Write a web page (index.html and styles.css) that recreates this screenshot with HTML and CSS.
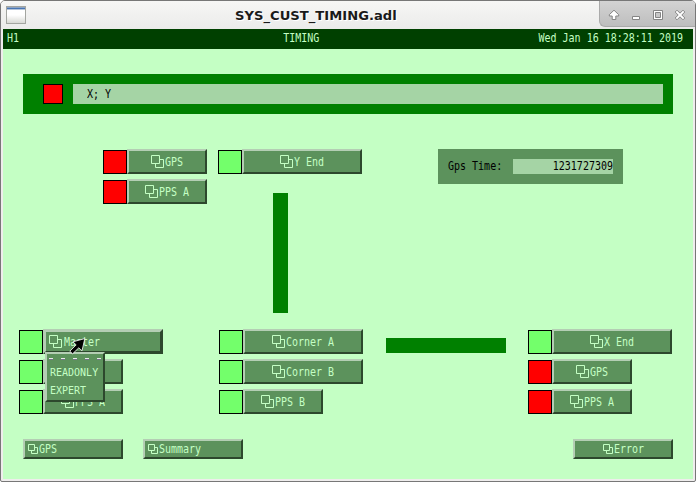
FILE: index.html
```html
<!DOCTYPE html>
<html lang="en">
<head>
<meta charset="utf-8">
<title>SYS_CUST_TIMING.adl</title>
<link rel="stylesheet" href="styles.css">
</head>
<body>
<svg class="defs" aria-hidden="true">
  <symbol id="rel" viewBox="0 0 13 13"><path d="M.5 .5H8.5V8.5H.5ZM9 4.5H12.5V12.5H4.5V9"/></symbol>
  <symbol id="rel-s" viewBox="0 0 10 10"><path d="M.5 .5H6.5V6.5H.5ZM7 3.5H9.5V9.5H3.5V7"/></symbol>
</svg>
<div class="window">
  <header class="titlebar">
    <svg class="app-icon" width="20" height="18" viewBox="0 0 20 18"><defs><linearGradient id="g" x1="0" y1="0" x2="0" y2="1"><stop offset="0" stop-color="#fff"/><stop offset=".5" stop-color="#fff"/><stop offset="1" stop-color="#d6d7d2"/></linearGradient></defs><rect x=".5" y=".5" width="19" height="17" fill="url(#g)" stroke="#a3a5a0"/><path d="M1 1.5H19" stroke="#8fa5c4"/><path d="M1 2.5H19" stroke="#4876b4"/><path d="M1 3.5H19" stroke="#b3c3da"/></svg>
    <h1>SYS_CUST_TIMING.adl</h1>
    <div class="controls">
      <svg width="96" height="27" viewBox="0 0 96 27">
        <g fill="#fff" stroke="#858585">
          <path d="M15 10.2L19.7 14.7V16H16.8V19.5H13.2V16H10.3V14.7Z"/>
          <path d="M33.5 16.5H40.5V19.5H33.5Z"/>
          <path fill-rule="evenodd" d="M54.5 10.5H63.5V19.5H54.5ZM56.5 12.5V17.5H61.5V12.5Z"/>
          <path d="M76.2 12L78 10.2L81 13.2L84 10.2L85.8 12L82.8 15L85.8 18L84 19.8L81 16.8L78 19.8L76.2 18L79.2 15Z"/>
        </g>
      </svg>
    </div>
  </header>
  <main class="display">
    <div class="status"><span class="t">H1</span><span class="t">TIMING</span><span class="t">Wed Jan 16 18:28:11 2019</span></div>
    <div class="banner"><i class="alarm"></i><div class="message"><span class="t">X; Y</span></div></div>
    <section class="upper">
      <div class="group">
        <div class="item"><i class="led red"></i><div class="btn"><svg class="icon"><use href="#rel"/></svg><span class="t">GPS</span></div></div>
        <div class="item"><i class="led red"></i><div class="btn"><svg class="icon"><use href="#rel"/></svg><span class="t">PPS A</span></div></div>
      </div>
      <div class="group y-end">
        <div class="item"><i class="led"></i><div class="btn wide"><svg class="icon"><use href="#rel"/></svg><span class="t">Y End</span></div></div>
        <i class="arm-y"></i>
      </div>
      <div class="gps"><span class="t">Gps Time:</span><div class="value"><span class="t">1231727309</span></div></div>
    </section>
    <section class="lower">
      <div class="group master">
        <div class="item"><i class="led"></i><div class="btn wide pressed"><svg class="icon"><use href="#rel"/></svg><span class="t">Master</span></div></div>
        <div class="item"><i class="led"></i><div class="btn"></div></div>
        <div class="item"><i class="led"></i><div class="btn"><svg class="icon"><use href="#rel"/></svg><span class="t">PPS A</span></div></div>
        <div class="menu">
          <svg class="tear" width="52" height="2"><path d="M0 .5H52" stroke="#e6efe6" stroke-dasharray="4 8"/><path d="M0 1.5H52" stroke="#77708a" stroke-dasharray="4 8"/></svg>
          <span>READONLY</span><span>EXPERT</span>
        </div>
        <svg class="cursor" width="17" height="17" viewBox="0 0 17 17"><path d="M15.8 .6L13 12.8L9.8 9.8L3.6 15.8L.8 13.2L7.2 6.9L4 3.8Z" fill="#000" stroke="#fff" stroke-width=".8"/></svg>
      </div>
      <div class="group">
        <div class="item"><i class="led"></i><div class="btn wide"><svg class="icon"><use href="#rel"/></svg><span class="t">Corner A</span></div></div>
        <div class="item"><i class="led"></i><div class="btn wide"><svg class="icon"><use href="#rel"/></svg><span class="t">Corner B</span></div></div>
        <div class="item"><i class="led"></i><div class="btn"><svg class="icon"><use href="#rel"/></svg><span class="t">PPS B</span></div></div>
      </div>
      <i class="arm-x"></i>
      <div class="group">
        <div class="item"><i class="led"></i><div class="btn wide"><svg class="icon"><use href="#rel"/></svg><span class="t">X End</span></div></div>
        <div class="item"><i class="led red"></i><div class="btn"><svg class="icon"><use href="#rel"/></svg><span class="t">GPS</span></div></div>
        <div class="item"><i class="led red"></i><div class="btn"><svg class="icon"><use href="#rel"/></svg><span class="t">PPS A</span></div></div>
      </div>
    </section>
    <footer class="links">
      <div class="btn small"><svg class="icon"><use href="#rel-s"/></svg><span class="t">GPS</span></div>
      <div class="btn small"><svg class="icon"><use href="#rel-s"/></svg><span class="t">Summary</span></div>
      <div class="btn small error"><svg class="icon"><use href="#rel-s"/></svg><span class="t">Error</span></div>
    </footer>
  </main>
</div>
</body>
</html>
```
FILE: styles.css
```css
* { box-sizing: border-box; }
html { background: #fff; }
body { margin: 0; font: 10px/13px "DejaVu Sans Mono", monospace; color: #c4ffc4; }
i { display: block; flex: none; }
.defs { position: absolute; width: 0; height: 0; }
.window {
  width: 696px; height: 482px; padding: 0 2px 2px;
  border: 1px solid #777; border-radius: 5px 5px 2px 2px;
  background: #efeded; overflow: hidden;
}
.titlebar {
  display: flex; height: 28px; margin: 0 -2px;
  background: linear-gradient(#f6f6f5, #ebebea);
}
.app-icon { margin: 5px 0 0 5px; flex: none; }
h1 {
  flex: 1; margin: 0 0 0 23px; padding-left: 186px; color: #1a1a1a;
  font: bold 13.15px/29px "DejaVu Sans", sans-serif; text-shadow: 1px 1px #fff;
  white-space: nowrap;
}
.controls {
  width: 96px; height: 26px; overflow: hidden;
  border: 1px solid #aaa; border-width: 0 0 1px 1px; border-radius: 0 0 0 6px;
  background: linear-gradient(#d3d3d3, #bebebe);
}
.controls svg { display: block; margin: -1px 0 0 -1px; }
.display { height: 450px; background: #c4ffc4; }
.t { display: block; white-space: pre; transform: scaleY(1.23); transform-origin: 0 10px; }
.status {
  display: flex; height: 20px; padding: 3px 10px 0 4px;
  background: #004000; justify-content: space-between;
}
.status .t:nth-child(2) { margin-left: 45px; }
.banner {
  display: flex; gap: 10px; height: 40px; margin: 25px 20px 0;
  padding: 10px 10px 10px 20px; background: #008000;
}
.alarm { width: 20px; background: #f00; border: 1px solid #000; }
.message { flex: 1; padding: 4px 14px; background: #a5d4a5; color: #000; }
.upper { display: flex; height: 164px; margin: 35px 0 0 100px; align-items: flex-start; }
.group { display: flex; flex-direction: column; gap: 5px; align-items: flex-start; }
.item { display: flex; align-items: flex-end; }
.led { width: 24px; height: 24px; background: #73ff6b; border: 1px solid #000; }
.red { background: #f00; }
.btn {
  display: flex; gap: 1px; justify-content: center; align-items: flex-start;
  width: 80px; height: 25px; padding-top: 4px;
  background: #5c925c; border: 2px solid; border-color: #b4ceb4 #2d482d #2d482d #b4ceb4;
}
.wide { width: 120px; }
.btn .t { margin-top: 1px; }
.icon { width: 13px; height: 13px; fill: none; stroke: #c4ffc4; flex: none; }
.pressed { border-width: 3px; padding: 3px 0 0 3px; justify-content: flex-start; gap: 2px; }
.y-end { margin-left: 11px; gap: 19px; }
.arm-y { width: 15px; height: 120px; margin-left: 55px; background: #008000; }
.gps {
  display: flex; justify-content: space-between; width: 185px; height: 35px;
  margin-left: 76px; padding: 10px; background: #5c925c; color: #000;
}
.gps .t { margin-top: 1px; }
.value { display: flex; justify-content: flex-end; width: 100px; height: 15px; background: #a5d4a5; }
.lower { display: flex; margin: 16px 0 0 16px; align-items: flex-start; }
.master { position: relative; width: 200px; }
.menu {
  position: absolute; left: 26px; top: 23px; width: 60px; height: 50px;
  padding: 4px 0 0 2px; background: #5c925c;
  border: 2px solid; border-color: #b4ceb4 #2d482d #2d482d #b4ceb4;
}
.menu span { display: block; height: 18px; padding: 6px 0 0 1px; }
.tear { display: block; }
.cursor { position: absolute; left: 50px; top: 9px; }
.arm-x { width: 120px; height: 15px; margin: 9px 22px 0 23px; background: #008000; }
.links { display: flex; gap: 20px; margin: 25px 20px 0; }
.small { width: 100px; height: 20px; padding: 3px 0 0 3px; justify-content: flex-start; }
.small .icon { width: 10px; height: 10px; }
.small .t { margin-top: -1px; }
.error { margin-left: auto; padding-left: 28px; }
```
